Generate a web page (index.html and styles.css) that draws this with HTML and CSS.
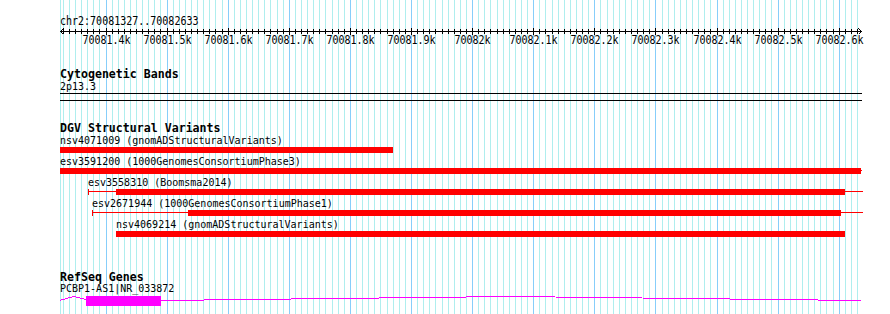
FILE: index.html
```html
<!DOCTYPE html>
<html lang="en">
<head>
    <meta charset="UTF-8">
    <title>chr2:70081327..70082633</title>
    <link rel="stylesheet" href="styles.css">
</head>
<body>

    <div class="browser">
        <svg class="grid" id="grid" width="890" height="314"></svg>

        <div class="ref">chr2:70081327..70082633</div>
        <svg class="ruler" id="ruler" width="830" height="20">
            <line class="axis" x1="0" y1="3.5" x2="801.5" y2="3.5"></line>
            <path class="axis" d="M3.5 0.5 L0.5 3.5 L3.5 6.5"></path>
            <path class="axis" d="M798.5 0.5 L801.5 3.5 L798.5 6.5"></path>
        </svg>

        <section class="track cyto">
            <h2 class="track-title">Cytogenetic Bands</h2>
            <div class="label">2p13.3</div>
            <div class="band"></div>
        </section>

        <section class="track dgv">
            <h2 class="track-title">DGV Structural Variants</h2>

            <div class="feature">
                <div class="label">nsv4071009 (gnomADStructuralVariants)</div>
                <div class="glyph" style="width:333px"><div class="block" style="width:333px"></div></div>
            </div>

            <div class="feature">
                <div class="label">esv3591200 (1000GenomesConsortiumPhase3)</div>
                <div class="glyph" style="width:802px"><div class="block" style="width:801px"></div></div>
            </div>

            <div class="feature" style="margin-left:28px">
                <div class="label">esv3558310 (Boomsma2014)</div>
                <div class="glyph capped" style="width:774px"><div class="block" style="margin-left:27px;width:729px"></div></div>
            </div>

            <div class="feature" style="margin-left:32px">
                <div class="label">esv2671944 (1000GenomesConsortiumPhase1)</div>
                <div class="glyph capped" style="width:770px"><div class="block" style="margin-left:95px;width:653px"></div></div>
            </div>

            <div class="feature" style="margin-left:56px">
                <div class="label">nsv4069214 (gnomADStructuralVariants)</div>
                <div class="glyph" style="width:729px"><div class="block" style="width:729px"></div></div>
            </div>
        </section>

        <section class="track refseq">
            <h2 class="track-title">RefSeq Genes</h2>
            <div class="label">PCBP1-AS1|NR_033872</div>
            <svg class="gene" width="802" height="12">
                <polyline class="intron" points="-1,4.5 14,0.5 26,3.5"></polyline>
                <rect class="exon" x="26" y="0" width="75" height="10"></rect>
                <polyline class="intron" points="101,4.5 451,0.5 801,4.5"></polyline>
            </svg>
        </section>
    </div>

    <script src="grid.js"></script>

</body>
</html>
```

FILE: styles.css
```css
body {
    margin: 0;
    background-color: #fff;
    color: #000;
    font-family: "DejaVu Sans Mono", monospace;
    font-size: 10px;
}
.browser {
    position: relative;
    isolation: isolate;
    box-sizing: border-box;
    width: 890px;
    height: 314px;
    padding: 16px 0 0 60px;
    overflow: hidden;
}
.grid {
    position: absolute;
    left: 0;
    top: 0;
    z-index: -1;
    shape-rendering: crispEdges;
}
.grid .minor {
    stroke: #afeeee;
}
.grid .major {
    stroke: #87cefa;
}
.ref, .label {
    line-height: 12px;
    white-space: pre;
}
/* the track font is a tall bitmap face, stretch the mono text to match */
.ref {
    transform: scaleY(1.2);
    transform-origin: 0 9.5px;
}
.ruler {
    display: block;
    shape-rendering: crispEdges;
}
.ruler .axis, .ruler .tick {
    stroke: #000;
    fill: none;
}
.ruler text {
    font-family: "DejaVu Sans Mono", monospace;
    font-size: 10px;
    text-anchor: middle;
}
.track-title {
    margin: 0;
    font-size: 11.6px;
    font-weight: bold;
    line-height: 14px;
}
.cyto {
    margin-top: 19px;
}
.band {
    width: 802px;
    height: 6px;
    border-top: 1px solid #000;
    border-bottom: 1px solid #000;
}
.dgv {
    margin-top: 20px;
}
.feature {
    margin-bottom: 3px;
}
.glyph {
    display: flex;
    height: 6px;
    background: linear-gradient(#f00, #f00) no-repeat 0 2px / 100% 1px;
}
.glyph.capped {
    border-left: 1px solid #f00;
}
.block {
    height: 6px;
    background-color: #f00;
}
.refseq {
    margin-top: 33px;
}
/* lift the gene name so its underscore clears the exon */
.refseq .label {
    margin: -1px 0 1px;
}
.gene {
    display: block;
    shape-rendering: crispEdges;
}
.gene .intron {
    fill: none;
    stroke: #f0f;
}
.gene .exon {
    fill: #f0f;
}
```

FILE: grid.js
```javascript
// chr2:70081327..70082633 is drawn across the panel, 0.611 px per bp
var START = 70081327;
var END = 70082633;
var ORIGIN = 61.4;
var PX_PER_BP = 0.611;
var PANEL_LEFT = 60;
var SVG_NS = 'http://www.w3.org/2000/svg';

function toX(bp) {
    return Math.floor(ORIGIN + (bp - START) * PX_PER_BP) + 0.5;
}

function addLine(svg, x1, y1, x2, y2, cls) {
    var el = document.createElementNS(SVG_NS, 'line');
    el.setAttribute('x1', x1);
    el.setAttribute('y1', y1);
    el.setAttribute('x2', x2);
    el.setAttribute('y2', y2);
    el.setAttribute('class', cls);
    svg.appendChild(el);
}

var grid = document.getElementById('grid');
var ruler = document.getElementById('ruler');

// left edge of the panel
addLine(grid, PANEL_LEFT + 0.5, 0, PANEL_LEFT + 0.5, 314, 'minor');

for (var bp = Math.ceil(START / 10) * 10; bp <= END; bp += 10) {
    var x = toX(bp);
    var major = bp % 100 === 0;

    addLine(grid, x, 0, x, 314, major ? 'major' : 'minor');

    // ticks and labels on the ruler use panel coordinates
    var rx = x - PANEL_LEFT;
    addLine(ruler, rx, major ? 0 : 1, rx, major ? 7 : 6, 'tick');

    if (major) {
        var label = document.createElementNS(SVG_NS, 'text');
        label.setAttribute('transform', 'translate(' + rx + ' 16) scale(1 1.2)');
        label.textContent = (bp / 1000) + 'k';
        ruler.appendChild(label);
    }
}
```
